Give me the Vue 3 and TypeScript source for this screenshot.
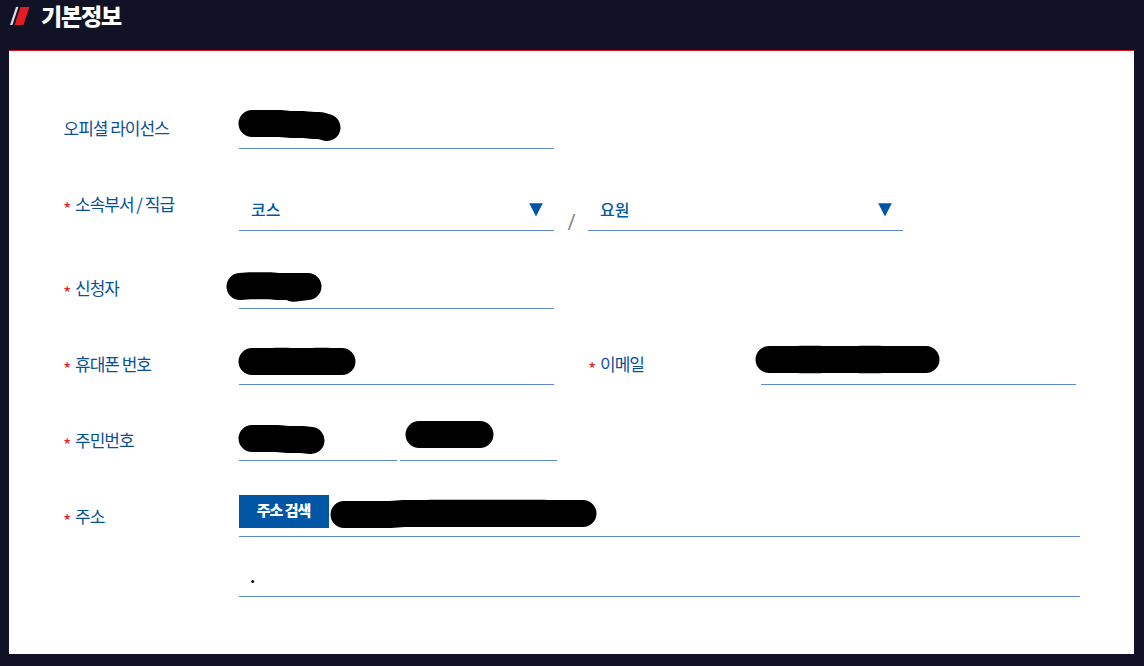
<script setup lang="ts">
interface Field {
  kind: 'input' | 'select' | 'button'
  size: string
  value?: string
}

interface Row {
  id: string
  label: string
  required: boolean
  fields: Field[]
  extraLabel?: string
}

const rows: Row[] = [
  { id: 'license', label: '오피셜 라이선스', required: false, fields: [{ kind: 'input', size: 'mid' }] },
  {
    id: 'dept',
    label: '소속부서 / 직급',
    required: true,
    fields: [
      { kind: 'select', size: 'mid', value: '코스' },
      { kind: 'select', size: 'mid', value: '요원' },
    ],
  },
  { id: 'name', label: '신청자', required: true, fields: [{ kind: 'input', size: 'mid' }] },
  { id: 'phone', label: '휴대폰 번호', required: true, fields: [{ kind: 'input', size: 'mid' }], extraLabel: '이메일' },
  {
    id: 'ssn',
    label: '주민번호',
    required: true,
    fields: [
      { kind: 'input', size: 'first' },
      { kind: 'input', size: 'second' },
    ],
  },
  { id: 'address', label: '주소', required: true, fields: [{ kind: 'button', size: 'wide', value: '주소 검색' }] },
  { id: 'detail', label: '', required: false, fields: [{ kind: 'input', size: 'wide', value: '.' }] },
]

// Marker strokes covering the private values
const marks: string[] = [
  'M252 123.5H280L292 124.6H304L314 125.5H320L327 127.5',
  'M240 286.5L250 285.8H270L278 286.5H308M293 288.3L303 287.2',
  'M252 361.5H342M275 361.2H288M315 361.2H328',
  'M769 359.5H926M800 359.2H820M860 359.2H880M800 359.8H820M860 359.8H880',
  'M252 438.5H277L288 439.5H302L311 440.5',
  'M419 434.5H480',
  'M344 514.5H390L404 513.5H583M430 513.2H545',
]
</script>

<template>
  <main class="page">
    <header class="heading">
      <svg class="slashes" width="20" height="18" viewBox="0 0 20 18">
        <path d="M6 0H8.4L2.4 18H0Z" fill="#dcdce0" />
        <path d="M10.4 0H19.4L13.6 18H4.6Z" fill="#e31b23" />
      </svg>
      <h1>기본정보</h1>
    </header>
    <section class="panel">
      <div v-for="row in rows" :key="row.id" class="row" :class="row.id">
        <div class="label"><i v-if="row.required">*</i><span>{{ row.label }}</span></div>
        <template v-for="(field, index) in row.fields" :key="index">
          <span v-if="row.id === 'dept' && index === 1" class="divider">/</span>
          <div class="field" :class="[field.size, field.kind]">
            <button v-if="field.kind === 'button'" type="button">{{ field.value }}</button>
            <span v-else-if="field.value" class="value">{{ field.value }}</span>
            <svg v-if="field.kind === 'select'" class="arrow" width="14" height="14" viewBox="0 0 14 14">
              <path d="M0.2 0.3H13.8L7 13.4Z" fill="#0056a4" />
            </svg>
          </div>
        </template>
        <template v-if="row.extraLabel">
          <div class="label extra"><i>*</i><span>{{ row.extraLabel }}</span></div>
          <div class="field mid input"></div>
        </template>
      </div>
    </section>
    <svg class="marks" width="1144" height="666" viewBox="0 0 1144 666">
      <path v-for="mark in marks" :key="mark" :d="mark" />
    </svg>
  </main>
</template>

<style>
body {
  background: #111226;
}
</style>

<style scoped>
.page {
  position: relative;
  box-sizing: border-box;
  width: 1144px;
  height: 666px;
  padding: 0 10px 12px 9px;
  display: flex;
  flex-direction: column;
  background: #111226;
  font-family: "Noto Sans CJK KR", sans-serif;
  letter-spacing: -1px;
}
.heading {
  height: 50px;
  display: flex;
  align-items: flex-start;
}
.slashes {
  margin: 7px 0 0 1px;
}
h1 {
  margin: 0 0 0 11px;
  font-size: 23px;
  line-height: 30px;
  font-weight: 900;
  letter-spacing: -1.2px;
  color: #fff;
}
.panel {
  box-sizing: border-box;
  flex: 1;
  border-top: 1px solid #d9141e;
  background: #fff;
  padding: 22px 55px 0 54px;
}
.row {
  height: 76px;
  display: flex;
  align-items: flex-end;
}
.row.dept { height: 82px; }
.row.name { height: 78px; }
.row.detail { height: 60px; }
.label {
  flex: none;
  width: 176px;
  height: 44px;
  display: flex;
  align-items: center;
  font-size: 17px;
  color: #0a5096;
  white-space: nowrap;
}
.license .label span {
  padding-left: 0.5px;
}
.dept .label { height: 56px; }
.label i {
  width: 12px;
  padding-top: 11px;
  box-sizing: border-box;
  font-style: normal;
  font-size: 18px;
  line-height: 25px;
  color: #e5252c;
}
.label.extra {
  width: 173px;
  margin-left: 34px;
}
.field {
  flex: none;
  box-sizing: border-box;
  height: 42px;
  border-bottom: 1px solid #6089d3;
  display: flex;
  align-items: center;
}
.mid { width: 315px; }
.first { width: 158px; }
.second { width: 157px; margin-left: 3px; }
.wide { width: 841px; }
.value {
  padding-left: 12px;
  line-height: 24px;
  color: #000;
}
.input .value {
  padding-left: 11px;
  font-weight: 700;
  font-size: 16px;
}
.select .value {
  flex: 1;
  margin-bottom: 1px;
  font-size: 16px;
  letter-spacing: 0;
  font-weight: 500;
  color: #0056a4;
}
.arrow {
  margin: 0 11px 0 0;
}
.divider {
  flex: none;
  width: 34px;
  box-sizing: border-box;
  text-align: center;
  font-family: "Open Sans", sans-serif;
  font-size: 22px;
  line-height: 20px;
  color: #8b8b8b;
}
button {
  width: 90px;
  height: 33px;
  margin-bottom: 8px;
  padding: 0 1px 4px 0;
  border: 0;
  background: #0056a4;
  color: #fff;
  font: 900 15px "Noto Sans CJK KR", sans-serif;
  letter-spacing: -1px;
}
.marks {
  position: absolute;
  inset: 0;
  pointer-events: none;
}
.marks path {
  fill: none;
  stroke: #000;
  stroke-width: 27px;
  stroke-linecap: round;
  stroke-linejoin: round;
}
</style>
